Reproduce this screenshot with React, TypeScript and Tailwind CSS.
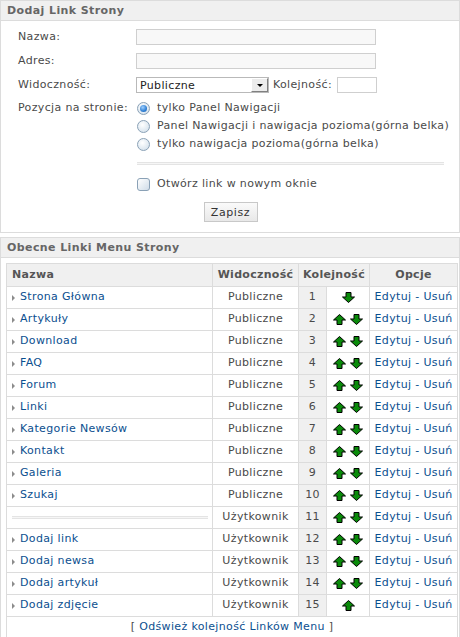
const links = [
  { name: 'Strona Główna', vis: 'Publiczne' },
  { name: 'Artykuły', vis: 'Publiczne' },
  { name: 'Download', vis: 'Publiczne' },
  { name: 'FAQ', vis: 'Publiczne' },
  { name: 'Forum', vis: 'Publiczne' },
  { name: 'Linki', vis: 'Publiczne' },
  { name: 'Kategorie Newsów', vis: 'Publiczne' },
  { name: 'Kontakt', vis: 'Publiczne' },
  { name: 'Galeria', vis: 'Publiczne' },
  { name: 'Szukaj', vis: 'Publiczne' },
  { name: '', vis: 'Użytkownik' },
  { name: 'Dodaj link', vis: 'Użytkownik' },
  { name: 'Dodaj newsa', vis: 'Użytkownik' },
  { name: 'Dodaj artykuł', vis: 'Użytkownik' },
  { name: 'Dodaj zdjęcie', vis: 'Użytkownik' },
];

const ArrowUp = () => (
  <svg width="13" height="11" viewBox="0 0 13 11" className="block">
    <polygon points="6.5,0.5 12.5,6 9,6 9,10.5 4,10.5 4,6 0.5,6" fill="#0a8a0a" stroke="#000" strokeWidth="1" strokeLinejoin="miter" />
  </svg>
);

const ArrowDown = () => (
  <svg width="13" height="11" viewBox="0 0 13 11" className="block">
    <polygon points="4,0.5 9,0.5 9,5 12.5,5 6.5,10.5 0.5,5 4,5" fill="#0a8a0a" stroke="#000" strokeWidth="1" strokeLinejoin="miter" />
  </svg>
);

const Radio = ({ checked }: { checked?: boolean }) => (
  <span className="w-[13px] h-[13px] rounded-full border border-[#8aa1b6] bg-[radial-gradient(circle_at_40%_35%,#ffffff,#dbe6ef_70%,#c5d4e2)] flex items-center justify-center shrink-0">
    {checked && (
      <span className="w-[7px] h-[7px] rounded-full bg-[radial-gradient(circle_at_40%_35%,#9fd0ff,#2f7fd3_60%,#1a5fae)]" />
    )}
  </span>
);

const Panel = ({ title, children }: { title: string; children: React.ReactNode }) => (
  <div className="border border-[#dcdcdc] bg-white">
    <div className="h-[20px] bg-[#f0f0f0] border-b border-[#dcdcdc] pl-[6px] font-bold text-[#666] leading-[20px] tracking-[0.4px]">
      {title}
    </div>
    {children}
  </div>
);

export default function App() {
  return (
    <div className="w-[460px] bg-white font-['DejaVu_Sans',Verdana,sans-serif] text-[11px] text-[#4a4a4a] tracking-[0.35px]">
      <Panel title="Dodaj Link Strony">
        <div className="pt-[8px] pb-[10px]">
          <div className="flex items-center h-[16px]">
            <div className="w-[135px] pl-[17px]">Nazwa:</div>
            <div className="w-[240px] h-[16px] border border-[#cfcfcf] bg-[#f8f8f8]" />
          </div>
          <div className="flex items-center h-[16px] mt-[8px]">
            <div className="w-[135px] pl-[17px]">Adres:</div>
            <div className="w-[240px] h-[16px] border border-[#cfcfcf] bg-[#f8f8f8]" />
          </div>
          <div className="flex items-center h-[16px] mt-[8px]">
            <div className="w-[135px] pl-[17px]">Widoczność:</div>
            <div className="w-[133px] h-[16px] border border-[#b9b9b9] bg-white flex items-center justify-between">
              <span className="pl-[3px] text-[#222] leading-none">Publiczne</span>
              <span className="w-[17px] h-[14px] bg-[#ececec] border border-t-white border-l-white border-r-[#808080] border-b-[#808080] flex items-center justify-center">
                <span className="w-0 h-0 border-l-[3px] border-r-[3px] border-t-[3px] border-l-transparent border-r-transparent border-t-black" />
              </span>
            </div>
            <span className="ml-[4px]">Kolejność:</span>
            <div className="ml-auto mr-[82px] w-[40px] h-[16px] border border-[#cfcfcf] bg-white" />
          </div>
          <div className="flex mt-[6px]">
            <div className="w-[135px] pl-[17px] leading-[18px]">Pozycja na stronie:</div>
            <div className="flex-1">
              <div className="flex items-center h-[18px] pl-[1px]">
                <Radio checked />
                <span className="ml-[7px]">tylko Panel Nawigacji</span>
              </div>
              <div className="flex items-center h-[18px] pl-[1px]">
                <Radio />
                <span className="ml-[7px]">Panel Nawigacji i nawigacja pozioma(górna belka)</span>
              </div>
              <div className="flex items-center h-[18px] pl-[1px]">
                <Radio />
                <span className="ml-[7px]">tylko nawigacja pozioma(górna belka)</span>
              </div>
              <div className="ml-[1px] mt-[9px] w-[307px] h-[3px] border-t border-b border-[#e4e4e4] bg-[#f6f6f6]" />
              <div className="flex items-center h-[18px] pl-[1px] mt-[10px]">
                <span className="w-[13px] h-[13px] rounded-[3px] border border-[#8aa1b6] bg-[linear-gradient(135deg,#ffffff,#cfdce8)] shrink-0" />
                <span className="ml-[7px]">Otwórz link w nowym oknie</span>
              </div>
            </div>
          </div>
          <div className="flex justify-center mt-[9px] pl-[1px]">
            <button className="w-[54px] h-[20px] border border-[#c8c8c8] bg-[linear-gradient(#fafafa,#e8e8e8)] text-[#333] tracking-[0.6px] leading-none">
              Zapisz
            </button>
          </div>
        </div>
      </Panel>

      <div className="mt-[4px]">
        <Panel title="Obecne Linki Menu Strony">
          <div className="pt-[5px] pl-[5px]">
            <table className="w-[451px] border-collapse table-fixed">
              <colgroup>
                <col className="w-[206px]" />
                <col className="w-[86px]" />
                <col className="w-[28px]" />
                <col className="w-[43px]" />
                <col className="w-[88px]" />
              </colgroup>
              <thead>
                <tr className="h-[23px] bg-[#f0f0f0] font-bold text-[#555] tracking-[0.3px]">
                  <th className="border border-[#dcdcdc] text-left pl-[5px] p-0 font-bold">Nazwa</th>
                  <th className="border border-[#dcdcdc] p-0 font-bold">Widoczność</th>
                  <th colSpan={2} className="border border-[#dcdcdc] p-0 font-bold">Kolejność</th>
                  <th className="border border-[#dcdcdc] p-0 font-bold">Opcje</th>
                </tr>
              </thead>
              <tbody>
                {links.map((l, i) => (
                  <tr key={i} className="h-[22px]">
                    <td className="border border-[#dcdcdc] p-0 pl-[5px]">
                      {l.name ? (
                        <div className="flex items-center">
                          <span className="w-0 h-0 border-t-[3px] border-b-[3px] border-l-[3px] border-t-transparent border-b-transparent border-l-[#8c8c8c]" />
                          <span className="ml-[5px] text-[#0b4f8f]">{l.name}</span>
                        </div>
                      ) : (
                        <div className="mr-[4px] h-[3px] border-t border-b border-[#e4e4e4] bg-[#f6f6f6]" />
                      )}
                    </td>
                    <td className="border border-[#dcdcdc] p-0 text-center">{l.vis}</td>
                    <td className="border border-[#dcdcdc] p-0 text-center bg-[#f0f0f0]">{i + 1}</td>
                    <td className="border border-[#dcdcdc] p-0">
                      <div className="flex justify-center gap-[4px]">
                        {i > 0 && <ArrowUp />}
                        {i < links.length - 1 && <ArrowDown />}
                      </div>
                    </td>
                    <td className="border border-[#dcdcdc] p-0 text-center text-[#0b4f8f]">Edytuj - Usuń</td>
                  </tr>
                ))}
                <tr className="h-[22px]">
                  <td colSpan={5} className="border border-[#dcdcdc] p-0 text-center">
                    [ <span className="text-[#0b4f8f]">Odśwież kolejność Linków Menu</span> ]
                  </td>
                </tr>
              </tbody>
            </table>
          </div>
        </Panel>
      </div>
    </div>
  );
}
